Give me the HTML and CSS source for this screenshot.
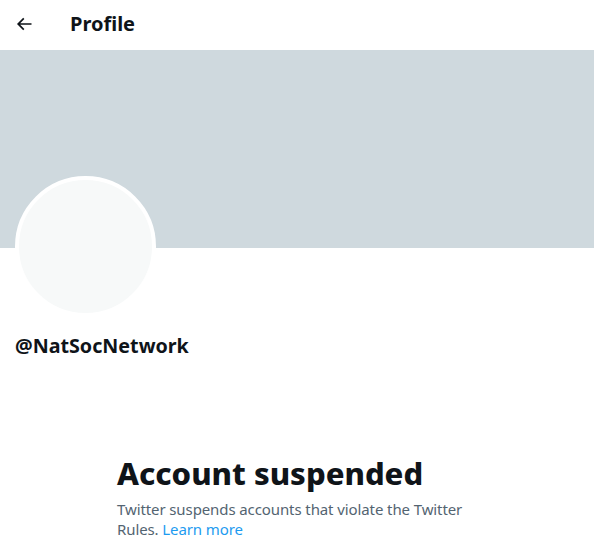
FILE: index.html
```html
<!DOCTYPE html>
<html lang="en">
<head>
<meta charset="utf-8">
<title>Profile</title>
<link rel="stylesheet" href="styles.css">
</head>
<body>
<div class="page">
  <header class="topbar">
    <svg class="back" viewBox="0 0 24 24" aria-hidden="true"><path d="M7.414 13l5.043 5.04-1.414 1.42L3.586 12l7.457-7.46 1.414 1.42L7.414 11H21v2H7.414z"/></svg>
    <h2 class="title">Profile</h2>
  </header>
  <div class="banner"></div>
  <div class="info">
    <div class="avatar"></div>
    <div class="handle">@NatSocNetwork</div>
  </div>
  <section class="empty">
    <h1 class="empty-title">Account suspended</h1>
    <p class="empty-text">Twitter suspends accounts that violate the Twitter Rules. <a href="#" class="link">Learn more</a></p>
  </section>
</div>
</body>
</html>
```
FILE: styles.css
```css
* { box-sizing: border-box; }
html, body { margin: 0; padding: 0; background: #fff; }
body {
  font-family: "Noto Sans", "Liberation Sans", sans-serif;
  color: #0f1419;
}
.topbar {
  height: 50px;
  display: flex;
  align-items: center;
  padding: 0 16px 2px 14px;
}
.back { width: 20px; height: 20px; fill: #0f1419; }
.title {
  margin: 0 0 0 36px;
  font-size: 20px;
  font-weight: 700;
  line-height: 24px;
}
.banner { height: 198px; background: #cfd9de; }
.info { padding: 0 16px 0 15px; }
.avatar {
  width: 141px;
  height: 141px;
  margin-top: -72px;
  border-radius: 50%;
  border: 4px solid #fff;
  background: #f7f9f9;
}
.handle {
  margin-top: 17px;
  font-size: 19.7px;
  font-weight: 700;
  line-height: 24px;
}
.empty {
  width: 360px;
  margin: 97px 0 0 117px;
}
.empty-title {
  margin: 0 0 8px;
  font-size: 31px;
  font-weight: 800;
  line-height: 36px;
}
.empty-text {
  margin: 0;
  font-size: 15px;
  line-height: 20px;
  letter-spacing: -0.1px;
  color: #536471;
}
.link { color: #1d9bf0; text-decoration: none; }
```
